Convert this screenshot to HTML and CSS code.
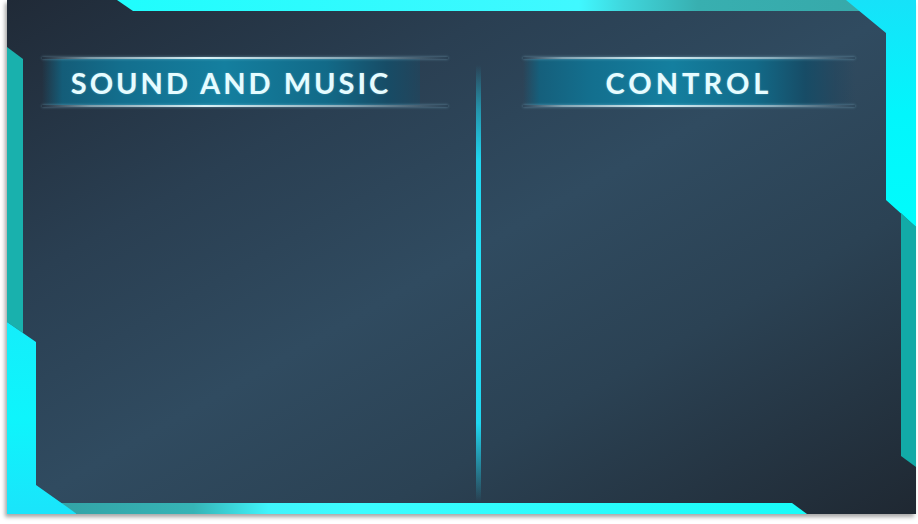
FILE: index.html
```html
<!DOCTYPE html>
<html lang="en">
<head>
<meta charset="utf-8">
<title>Settings</title>
<link rel="stylesheet" href="styles.css">
</head>
<body>
<div class="frame">
  <svg class="deco" width="909" height="514" viewBox="0 0 909 514" xmlns="http://www.w3.org/2000/svg">
    <defs>
      <linearGradient id="topbar" x1="110" y1="0" x2="855" y2="0" gradientUnits="userSpaceOnUse">
        <stop offset="0" stop-color="#1ffdfd"/>
        <stop offset="0.62" stop-color="#40f8ff"/>
        <stop offset="0.68" stop-color="#3fd6dc"/>
        <stop offset="0.78" stop-color="#38afb0"/>
        <stop offset="1" stop-color="#37a9aa"/>
      </linearGradient>
      <linearGradient id="botbar" x1="52" y1="0" x2="800" y2="0" gradientUnits="userSpaceOnUse">
        <stop offset="0" stop-color="#33a3a6"/>
        <stop offset="0.18" stop-color="#36b4b6"/>
        <stop offset="0.28" stop-color="#40f4fb"/>
        <stop offset="0.4" stop-color="#3cfcff"/>
        <stop offset="1" stop-color="#18fbf8"/>
      </linearGradient>
      <linearGradient id="rcyan" x1="0" y1="0" x2="0" y2="227" gradientUnits="userSpaceOnUse">
        <stop offset="0" stop-color="#16e2f9"/>
        <stop offset="0.5" stop-color="#02f6fc"/>
        <stop offset="1" stop-color="#00fcfc"/>
      </linearGradient>
      <linearGradient id="lcyan" x1="0" y1="322" x2="0" y2="514" gradientUnits="userSpaceOnUse">
        <stop offset="0" stop-color="#14eefb"/>
        <stop offset="0.5" stop-color="#0ef5fc"/>
        <stop offset="1" stop-color="#1ae4fb"/>
      </linearGradient>
    </defs>
    <polygon points="110,0 843,0 855,11 126,11" fill="url(#topbar)"/>
    <polygon points="839,0 909,0 909,227 879,200 879,33" fill="url(#rcyan)"/>
    <polygon points="894,213 909,227 909,467 894,456" fill="#12aaa7"/>
    <polygon points="0,47 16,59 16,333 0,322" fill="#19b1ad"/>
    <polygon points="52,503 785,503 800,514 70,514" fill="url(#botbar)"/>
    <polygon points="0,322 29,342 29,485 70,514 0,514" fill="url(#lcyan)"/>
  </svg>
  <section class="col col-left">
    <div class="header header-left"><h2 class="title title-left">SOUND AND MUSIC</h2></div>
  </section>
  <div class="divider"></div>
  <section class="col col-right">
    <div class="header header-right"><h2 class="title title-right">CONTROL</h2></div>
  </section>
</div>
</body>
</html>
```
FILE: styles.css
```css
html, body {
  margin: 0;
  padding: 0;
  background: #ffffff;
}

body {
  min-height: 524px;
}

.frame {
  position: relative;
  margin-left: 7px;
  width: 909px;
  height: 514px;
  display: flex;
  background: linear-gradient(to bottom right, #202a37 0%, #2a3f52 28%, #304b60 50%, #2b4254 70%, #1f2832 100%);
  box-shadow: -2px 3px 4px rgba(0, 0, 0, 0.35);
}

.deco {
  position: absolute;
  left: 0;
  top: 0;
  pointer-events: none;
}

.col {
  box-sizing: border-box;
  padding-top: 56px;
}

.col-left {
  width: 469px;
  padding-left: 35px;
  padding-right: 28px;
}

.col-right {
  flex: 1;
  padding-left: 42px;
  padding-right: 61px;
}

.divider {
  width: 5px;
  margin: 65px 0 12px;
  background: linear-gradient(to bottom,
    rgba(31, 211, 238, 0) 0%,
    rgba(31, 211, 238, 0.55) 10%,
    #1fd6f0 22%,
    #22e2f7 50%,
    #1fd6f0 82%,
    rgba(31, 211, 238, 0.45) 92%,
    rgba(31, 211, 238, 0) 100%);
}

.header {
  position: relative;
  height: 52px;
  display: flex;
  align-items: center;
  justify-content: center;
  background: linear-gradient(to right,
      rgba(17, 96, 126, 0) 0%,
      rgba(17, 100, 130, 0.85) 5%,
      #136f8e 20%,
      #147f9f 45%,
      #126a88 70%,
      #174c66 85%,
      rgba(30, 70, 95, 0.5) 94%,
      rgba(30, 70, 95, 0) 100%);
  background-clip: content-box;
  padding: 3px 0;
  box-sizing: border-box;
}

.header::before,
.header::after {
  content: "";
  position: absolute;
  left: 0;
  right: 0;
  height: 2px;
  background: linear-gradient(to right,
    rgba(200, 240, 250, 0) 0%,
    rgba(200, 240, 250, 0.55) 12%,
    rgba(225, 250, 255, 0.95) 40%,
    rgba(200, 240, 250, 0.6) 75%,
    rgba(200, 240, 250, 0) 100%);
  box-shadow: 0 0 3px rgba(170, 230, 250, 0.5);
}

.header::before {
  top: 1px;
}

.header::after {
  bottom: 1px;
}

.header-left {
  padding-right: 28px;
}

.title {
  margin: 0;
  font-family: "Lato", "Liberation Sans", sans-serif;
  font-weight: 700;
  font-size: 29px;
  line-height: 1;
  color: #e6fcff;
  text-shadow: 0 0 2px rgba(200, 245, 255, 0.35);
}

.title-left {
  letter-spacing: 3px;
}

.title-right {
  letter-spacing: 4px;
}
```
